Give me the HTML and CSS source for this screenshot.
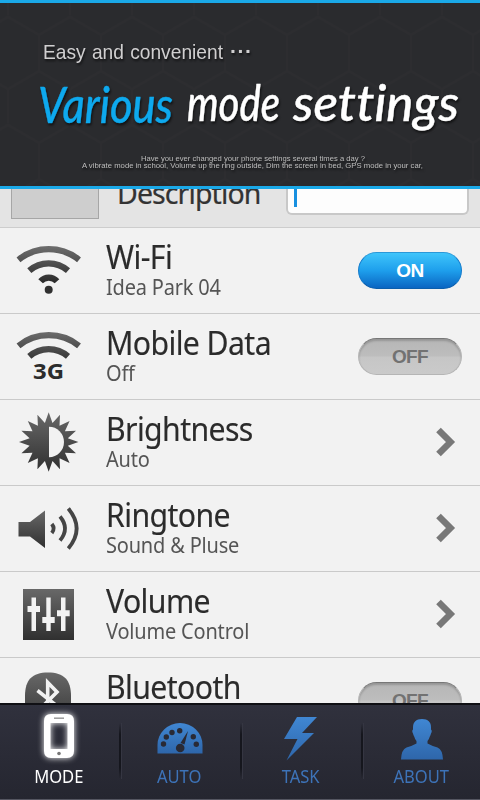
FILE: index.html
```
<!DOCTYPE html>
<html lang="en">
<head>
<meta charset="utf-8">
<title>Mode settings</title>
<link rel="stylesheet" href="styles.css">
</head>
<body>
<main class="screen">
  <header class="banner">
    <svg class="banner-art" width="480" height="183" viewBox="0 3 480 183">
      <defs>
        <pattern id="hex" width="62" height="108" patternUnits="userSpaceOnUse" x="287" y="15">
          <path d="M0 20 31 2 62 20V56L31 74 0 56ZM31 74V108" fill="none" stroke="#fff" stroke-opacity=".012" stroke-width="2"/>
        </pattern>
      </defs>
      <rect y="3" width="480" height="183" fill="url(#hex)"/>
      <text class="tagline" x="43" y="59" textLength="180" lengthAdjust="spacingAndGlyphs">Easy and convenient</text>
      <text class="tagline dots" x="230" y="58" textLength="22">···</text>
      <text class="headline accent" x="38" y="123" textLength="135" lengthAdjust="spacingAndGlyphs">Various</text>
      <text class="headline" x="187" y="121" textLength="93" lengthAdjust="spacingAndGlyphs">mode</text>
      <text class="headline" x="293" y="121" textLength="166" lengthAdjust="spacingAndGlyphs">settings</text>
      <text class="note" x="141" y="161" textLength="224" lengthAdjust="spacingAndGlyphs">Have you ever changed your phone settings several times a day ?</text>
      <text class="note" x="82" y="168" textLength="341" lengthAdjust="spacingAndGlyphs">A vibrate mode in school, Volume up the ring outside, Dim the screen in bed, GPS mode in your car,</text>
    </svg>
  </header>

  <section class="list">
    <div class="describe">
      <div class="thumb"></div>
      <div class="label">Description</div>
      <div class="field"><i class="caret"></i></div>
    </div>

    <div class="row">
      <svg class="icon" viewBox="0 228 90 85">
        <defs>
          <linearGradient id="g1" gradientUnits="userSpaceOnUse" x1="0" y1="247" x2="0" y2="282"><stop stop-color="#6c6c6c"/><stop offset="1" stop-color="#2c2c2c"/></linearGradient>
        </defs>
        <g fill="none" stroke="url(#g1)" stroke-width="6.2">
          <path d="M18.5 259.8A48.5 48.5 0 0 1 79 259.8"/><path d="M29.3 270.6A29.3 29.3 0 0 1 68 270.6"/><path d="M40.6 281.2A11 11 0 0 1 57 281.2"/>
        </g>
        <circle cx="48.7" cy="289.8" r="4" fill="#303030"/>
      </svg>
      <div class="text"><div class="title">Wi-Fi</div><div class="sub">Idea Park 04</div></div>
      <div class="toggle on">ON</div>
    </div>

    <div class="row">
      <svg class="icon" viewBox="0 314 90 85">
        <defs>
          <linearGradient id="g2" gradientUnits="userSpaceOnUse" x1="0" y1="332" x2="0" y2="360"><stop stop-color="#6c6c6c"/><stop offset="1" stop-color="#363636"/></linearGradient>
        </defs>
        <g fill="none" stroke="url(#g2)" stroke-width="6.2">
          <path d="M18.5 345.8A48.5 48.5 0 0 1 79 345.8"/><path d="M29.3 356.4A29.3 29.3 0 0 1 68 356.4"/>
        </g>
        <text class="three-g" x="33" y="378.5" textLength="31" lengthAdjust="spacingAndGlyphs">3G</text>
      </svg>
      <div class="text"><div class="title">Mobile Data</div><div class="sub">Off</div></div>
      <div class="toggle">OFF</div>
    </div>

    <div class="row">
      <svg class="icon" viewBox="0 400 90 85">
        <defs>
          <linearGradient id="g3" x2="0" y2="1"><stop stop-color="#686868"/><stop offset="1" stop-color="#303030"/></linearGradient>
        </defs>
        <g transform="translate(48.7 442)">
          <path fill="url(#g3)" d="M29.7 0 19.1 3.8 27.3 11.3 16.2 10.8 20.9 20.9 10.8 16.2 11.3 27.3 3.8 19.1 0 29.7-3.8 19.1-11.3 27.3-10.8 16.2-20.9 20.9-16.2 10.8-27.3 11.3-19.1 3.8-29.7 0-19.1-3.8-27.3-11.3-16.2-10.8-20.9-20.9-10.8-16.2-11.3-27.3-3.8-19.1 0-29.7 3.8-19.1 11.3-27.3 10.8-16.2 20.9-20.9 16.2-10.8 27.3-11.3 19.1-3.8Z"/>
          <path fill="#f2f2f2" d="M.3-15.3A15 15.3 0 0 1 .3 15.3Z"/>
        </g>
      </svg>
      <div class="text"><div class="title">Brightness</div><div class="sub">Auto</div></div>
      <svg class="chevron" viewBox="0 0 20 30"><path d="M2.5 3 14.5 15 2.5 27"/></svg>
    </div>

    <div class="row">
      <svg class="icon" viewBox="0 486 90 85">
        <path fill="url(#g3)" d="M18.5 522H30L45 510.5V548L30 536.5H18.5Z"/>
        <g fill="none" stroke="#454545" stroke-width="3.8">
          <path d="M51.8 524Q55.5 528.5 51.8 533"/><path d="M60 516.5Q70 528.5 60 540.5"/><path d="M68.3 508.5Q85 528.5 68.3 548.5"/>
        </g>
      </svg>
      <div class="text"><div class="title">Ringtone</div><div class="sub">Sound &amp; Pluse</div></div>
      <svg class="chevron" viewBox="0 0 20 30"><path d="M2.5 3 14.5 15 2.5 27"/></svg>
    </div>

    <div class="row">
      <svg class="icon" viewBox="0 572 90 85">
        <path fill="url(#g3)" d="M23 589H74V640H23Z"/>
        <path fill="#f2f2f2" d="M31.5 597.5H36V606H40V612H36V631H31.5V612H27.5V606H31.5ZM46.3 597.5H50.7V617H54.7V623H50.7V631H46.3V623H42.3V617H46.3ZM61 597.5H65.5V610.3H69.7V616.3H65.5V631H61V616.3H57V610.3H61Z"/>
      </svg>
      <div class="text"><div class="title">Volume</div><div class="sub">Volume Control</div></div>
      <svg class="chevron" viewBox="0 0 20 30"><path d="M2.5 3 14.5 15 2.5 27"/></svg>
    </div>

    <div class="row last">
      <svg class="icon" viewBox="0 658 90 85">
        <path fill="url(#g3)" d="M25 696C25 680 32 672.5 48 672.5S71 680 71 696V710C71 722 62 730 48 730S25 722 25 710Z"/>
        <path fill="none" stroke="#f2f2f2" stroke-width="3.6" d="M37.5 690.5 57 706 47.7 715V682.5L57 692 38 711"/>
      </svg>
      <div class="text"><div class="title">Bluetooth</div></div>
      <div class="toggle">OFF</div>
    </div>
  </section>

  <nav class="tabs">
    <div class="tab active">
      <svg class="tab-icon phone" viewBox="0 0 60 56">
        <path fill="#fff" fill-rule="evenodd" d="M22 4H38Q45 4 45 11V41Q45 48 38 48H22Q15 48 15 41V11Q15 4 22 4ZM21.500 13V39H38.500V13Z"/>
        <path d="M25 8.200H35" stroke="#999" stroke-width="1.500"/><circle cx="30" cy="43.500" r="1.800" fill="#777"/>
      </svg>
      <span>MODE</span>
    </div>
    <div class="tab">
      <svg class="tab-icon" viewBox="0 0 60 56">
        <defs><linearGradient id="blue" x2="0" y2="1"><stop stop-color="#4087d3"/><stop offset="1" stop-color="#2e66aa"/></linearGradient></defs>
        <path fill="url(#blue)" d="M7.500 43.500V35A22.500 22 0 0 1 52.500 35V43.500Z"/>
        <g fill="#292a35"><circle cx="13.500" cy="34" r="2.700"/><circle cx="16.300" cy="27" r="2.700"/><circle cx="22" cy="22.500" r="2.700"/><circle cx="29.700" cy="20.700" r="2.700"/><circle cx="43.300" cy="26.800" r="2.700"/><circle cx="46.300" cy="34.200" r="2.700"/><circle cx="30.200" cy="38" r="4.300"/><path d="M30.500 33 38 21 34.500 34.500Z"/></g>
      </svg>
      <span>AUTO</span>
    </div>
    <div class="tab">
      <svg class="tab-icon" viewBox="0 0 60 56"><path fill="url(#blue)" d="M26 7H46L31 23H43L15.500 50.500 26.500 29H13Z"/></svg>
      <span>TASK</span>
    </div>
    <div class="tab">
      <svg class="tab-icon" viewBox="0 0 60 56"><path fill="url(#blue)" d="M30 9C36 9 39 12 39 17.500V19.500Q40.500 20.500 39 23.500Q38.500 25.500 37.800 26.500Q37 29.500 35.500 31V33.500Q40 36 45.500 37.500Q50.500 39.500 51 49.500H9Q9.500 39.500 14.500 37.500Q20 36 24.500 33.500V31Q23 29.500 22.200 26.500Q21.500 25.500 21 23.500Q19.500 20.500 21 19.500V17.500C21 12 24 9 30 9Z"/></svg>
      <span>ABOUT</span>
    </div>
  </nav>
</main>
</body>
</html>
```
FILE: styles.css
```
* { box-sizing: border-box; }
body { margin: 0; background: #f2f2f2; font-family: "Noto Sans", "Open Sans", sans-serif; }
.screen { width: 480px; height: 800px; overflow: hidden; display: flex; flex-direction: column; }

.banner { flex: none; height: 189px; border-top: 3px solid #1aa9e8; border-bottom: 3px solid #1aa9e8; background: #2a2b2e; }
.banner-art { display: block; }
.banner text { filter: drop-shadow(1px 2px 1px rgba(0, 0, 0, .6)); }
.tagline { font-family: "Liberation Sans", Arial, sans-serif; font-size: 21px; fill: #d0cfd0; word-spacing: 1px; }
.dots { font-weight: bold; }
.headline { font-family: Lato, sans-serif; font-style: italic; font-weight: 500; font-size: 50px; fill: #fff; stroke: #fff; stroke-width: .4px; stroke-linejoin: round; font-variant-ligatures: none; }
.accent { fill: #0ea9ee; stroke: #0ea9ee; }
.note { font-family: "Liberation Sans", Arial, sans-serif; font-size: 7.5px; fill: #bdbdbd; }

.list { flex: none; height: 514px; overflow: hidden; background: #f2f2f2; }
.describe { height: 39px; overflow: hidden; display: flex; align-items: flex-end; background: #e4e4e4; border-bottom: 1px solid #cdcdcd; padding-left: 11px; }
.thumb { width: 88px; height: 80px; margin-bottom: 8px; border: 1px solid #a6a6a6; background: #cecece; }
.label { width: 188px; padding-left: 18px; font-size: 28.5px; line-height: 40px; color: #333; margin-bottom: 14px; letter-spacing: -.9px; -webkit-text-stroke: .2px #333; }
.field { width: 183px; height: 60px; margin: 0 0 12px -1px; border: 2px solid #c8c8c8; border-top: 0; border-radius: 6px; background: #fdfdfd; padding: 0 0 6px 6px; }
.caret { display: block; width: 3px; height: 100%; background: #1890e0; }

.row { height: 86px; border-bottom: 1px solid #cacaca; display: flex; align-items: flex-start; }
.row.last { height: 46px; overflow: hidden; border: 0; }
.icon { flex: none; width: 90px; height: 85px; }
.three-g { font-weight: 700; font-size: 21px; fill: #2c2c2c; }
.text { width: 250px; padding: 8px 0 0 16px; white-space: nowrap; }
.title, .sub { transform: scaleX(.93); transform-origin: 0 50%; }
.title { font-size: 32.5px; line-height: 42px; color: #2b2b2b; letter-spacing: -.65px; -webkit-text-stroke: .15px #2b2b2b; }
.sub { font-size: 21.5px; line-height: 26px; margin-top: -4px; color: #555; letter-spacing: -.2px; }
.toggle { width: 104px; height: 37px; margin: 24px 0 0 18px; border-radius: 19px; font: bold 19px/35px "Liberation Sans", Arial, sans-serif; letter-spacing: -.6px; text-align: center; color: #727272; border: 1px solid #b5b5b5; border-top-color: #777; background: linear-gradient(#b6b6b6, #bdbdbd 48%, #c6c6c6 52%, #cacaca); box-shadow: inset 0 2px 2px rgba(0, 0, 0, .18); }
.toggle.on { color: #fff; border-color: #2b98d8 #137acb #0b5eac; background: linear-gradient(#3fc5fb, #1e9fec 50%, #0a65c2); box-shadow: none; }
.chevron { width: 20px; height: 30px; margin: 27px 0 0 96px; fill: none; stroke: #787878; stroke-width: 6.5px; }

.tabs { flex: 1; display: flex; background: linear-gradient(#30313d, #252630); border-top: 2px solid #101014; border-bottom: 1px solid #555661; }
.tab { position: relative; width: 121px; flex: none; display: flex; flex-direction: column; align-items: center; color: #3d73b8; font-size: 18px; line-height: 24px; padding-right: 4px; }
.tab span { transform: scaleX(.92); margin-top: -2px; }
.tab + .tab::before { content: ""; position: absolute; left: -2px; top: 18px; width: 2px; height: 56px; background: linear-gradient(transparent, #15161d 20%, #15161d 80%, transparent); border-right: 1px solid #353642; }
.tab-icon { width: 60px; height: 56px; margin-top: 5px; }
.phone { filter: drop-shadow(0 0 3px #fff); }
.active { color: #fff; }
```
